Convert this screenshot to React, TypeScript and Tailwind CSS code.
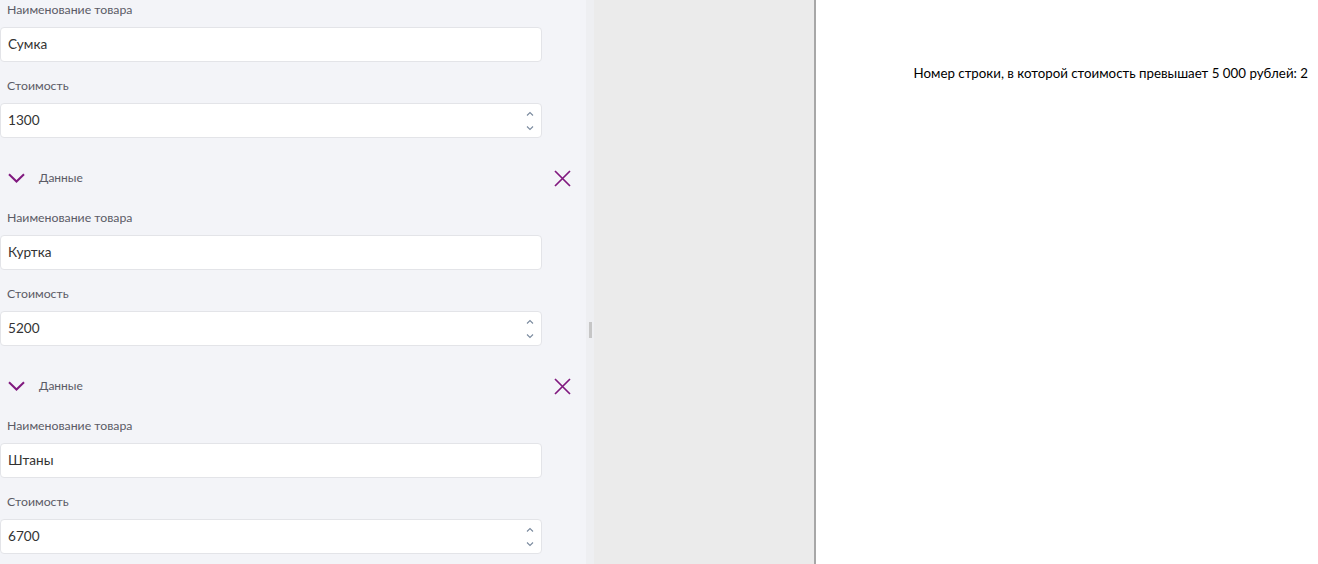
import React from "react";

const items = [
  { name: "Сумка", price: "1300", header: false },
  { name: "Куртка", price: "5200", header: true },
  { name: "Штаны", price: "6700", header: true },
];

function Spin() {
  return (
    <div className="flex flex-col items-center gap-[10px] mr-[7px]">
      <svg width="8" height="5" viewBox="0 0 8 5">
        <path d="M1 4.5 L4 1.5 L7 4.5" fill="none" stroke="#7a8a9e" strokeWidth="1.1" />
      </svg>
      <svg width="8" height="5" viewBox="0 0 8 5">
        <path d="M1 0.5 L4 3.5 L7 0.5" fill="none" stroke="#7a8a9e" strokeWidth="1.1" />
      </svg>
    </div>
  );
}

function Field({ label, value, spin }: { label: string; value: string; spin?: boolean }) {
  return (
    <div className="flex flex-col">
      <div className="h-[20px] pl-[7px] text-[12.3px] leading-[20px] text-[#5b5b66]">{label}</div>
      <div className="mt-[7px] h-[35px] w-[542px] rounded-[4px] border border-[#e3e4e8] bg-white flex items-center justify-between pl-[7px]">
        <span className="text-[13.6px] text-[#333]">{value}</span>
        {spin && <Spin />}
      </div>
    </div>
  );
}

export default function App() {
  return (
    <div className="flex h-[564px] w-[1318px] overflow-hidden" style={{ fontFamily: '"Lato", "Noto Sans", sans-serif' }}>
      <div className="w-[586px] bg-[#f3f4f8] flex flex-col">
        {items.map((it, i) => (
          <div key={i} className="flex flex-col">
            {it.header && (
              <div className="h-[28px] flex items-center justify-between pr-[15px] mt-[26px] mb-[16px]">
                <div className="flex items-center">
                  <svg className="ml-[8px]" width="17" height="10" viewBox="0 0 17 10">
                    <path d="M1 1.2 L8.5 8.5 L16 1.2" fill="none" stroke="#80197f" strokeWidth="2" />
                  </svg>
                  <span className="ml-[14px] text-[12px] text-[#5b5b66]">Данные</span>
                </div>
                <svg width="17" height="17" viewBox="0 0 17 17">
                  <path d="M1 1 L16 16 M16 1 L1 16" fill="none" stroke="#80197f" strokeWidth="1.7" />
                </svg>
              </div>
            )}
            <div className="flex flex-col gap-[14px]">
              <Field label="Наименование товара" value={it.name} />
              <Field label="Стоимость" value={it.price} spin />
            </div>
          </div>
        ))}
      </div>
      <div className="w-[8px] bg-[#eeeff2] flex justify-center pt-[322px]">
        <div className="w-[3px] h-[16px] bg-[#c6c6c6]" />
      </div>
      <div className="w-[222px] bg-[#ebebeb] border-r-2 border-[#a7a7a7]" />
      <div className="flex-1 bg-white flex justify-end pr-[10px] pt-[64px]">
        <span className="text-[13.3px] leading-[18px] text-black h-[18px]" style={{ fontFamily: '"Lato", "Open Sans", sans-serif' }}>
          Номер строки, в которой стоимость превышает 5 000 рублей: 2
        </span>
      </div>
    </div>
  );
}
